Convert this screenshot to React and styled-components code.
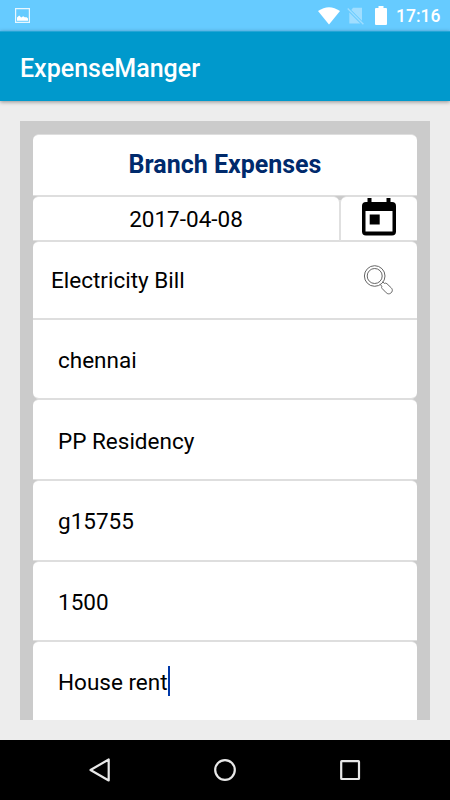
import React, {Component} from 'react'
import styled, {createGlobalStyle} from 'styled-components'

const GlobalStyle = createGlobalStyle`
  * {
    box-sizing: border-box;
  }

  body {
    margin: 0;
    font-family: Roboto, sans-serif;
  }
`

const Screen = styled.div`
  display: flex;
  flex-direction: column;
  width: 450px;
  height: 800px;
  overflow: hidden;
  background: #ededed;
`

const StatusBar = styled.div`
  display: flex;
  align-items: center;
  flex: 0 0 31px;
  padding: 0 10px 0 15px;
  background: #66cbff;
  color: #fff;
`

const StatusIcons = styled.div`
  display: flex;
  align-items: center;
  margin-left: auto;
`

const Clock = styled.span`
  width: 44px;
  margin-left: 9px;
  padding-top: 1px;
  font-size: 17.5px;
  font-weight: 500;
  line-height: 20px;
  white-space: nowrap;
`

const AppBar = styled.header`
  display: flex;
  align-items: center;
  flex: 0 0 70px;
  padding: 4px 20px 0;
  background: #0099cc;
  border-top: 1px solid #24a5d6;
  box-shadow: 0 1px 4px rgba(0, 0, 0, .4);
`

const AppTitle = styled.h1`
  margin: 0;
  color: #fff;
  font-size: 25px;
  font-weight: 500;
  line-height: 30px;
`

const Panel = styled.main`
  flex: 1;
  min-height: 0;
  margin: 20px;
  padding: 13px 13px 0;
  overflow: hidden;
  background: #cbcbcb;
`

const Card = styled.div`
  display: flex;
  align-items: center;
  flex: ${props => props.$grow ? 1 : 'none'};
  justify-content: ${props => props.$center ? 'center' : 'space-between'};
  width: ${props => props.$width || 'auto'};
  height: ${props => props.$height}px;
  padding: ${props => props.$pad || '0'};
  background: #fff;
  border: 1px solid #dedede;
  border-width: 1px 0;
  border-radius: ${props => props.$corners || '6px 6px 0 0'};
`

const Row = styled.div`
  display: flex;
  gap: 2px;
  background: linear-gradient(#cbcbcb 4px, #e0e0e0 4px);
`

const Heading = styled.h2`
  margin: 0;
  color: #002a6c;
  font-size: 25px;
  font-weight: 700;
  line-height: 30px;
`

const Value = styled.span`
  display: flex;
  align-items: center;
  color: #000;
  font-size: 22.5px;
  line-height: 30px;
  white-space: nowrap;
`

const Caret = styled.span`
  width: 2px;
  height: 30px;
  margin-top: -2px;
  background: #0038a8;
`

const NavBar = styled.nav`
  display: flex;
  align-items: center;
  justify-content: center;
  gap: 101px;
  flex: 0 0 60px;
  background: #000;
`

const PictureIcon = () => (
  <svg width='15' height='15' viewBox='0 0 15 15'>
    <path d='M.6.6h13.8v13.8H.6z' fill='none' stroke='#e8f7ff' strokeWidth='1.2' />
    <path d='M2 12.8V9.5l2.2-2 2 2 2-1.2 1.5 1h2l1.3 1.2v2.3z' fill='#fff' />
  </svg>
)

const WifiIcon = () => (
  <svg width='22' height='18' viewBox='0 0 22 18'>
    <path d='M0 4.1Q11-3.6 22 4.1L11 17.6z' fill='#fff' />
  </svg>
)

const NoSimIcon = styled(({className}) => (
  <svg className={className} width='18' height='18' viewBox='0 0 18 18'>
    <path d='M6 .8h9v13L4.3 2.9z' fill='#a0deff' />
    <path d='M2.3 5.5l11 11h-11z' fill='#a0deff' />
    <path d='M.7 1.5l15.7 15.7' stroke='#a0deff' strokeWidth='1.3' />
  </svg>
))`
  margin-left: 7px;
`

const BatteryIcon = styled(({className}) => (
  <svg className={className} width='12' height='19' viewBox='0 0 12 19'>
    <path d='M3.5 0h5v2H11q1 0 1 1v15q0 1-1 1H1q-1 0-1-1V3q0-1 1-1h2.5z' fill='#fff' />
  </svg>
))`
  margin-left: 10px;
`

const CalendarIcon = () => (
  <svg width='36' height='40' viewBox='0 0 36 40'>
    <path
      d='M6.5 1h4v4h15V1h4v4H31q4 0 4 4v25.5q0 4-4 4H5q-4 0-4-4V9q0-4 4-4h1.5zM4.5 14v20.5h27V14z'
      fill='#000'
      fillRule='evenodd'
    />
    <path d='M8.7 17.5h10v10h-10z' fill='#000' />
  </svg>
)

const SearchIcon = () => (
  <svg width='32' height='32' viewBox='0 0 32 32' fill='none' stroke='#666' strokeWidth='1'>
    <circle cx='11.7' cy='12' r='10.3' />
    <circle cx='11.7' cy='12' r='7.5' />
    <path d='M17.3 20.5l1.5 1.8q-.7 1.2.4 2.3l4.1 4.2c3.2 3.2 8.2-1.7 5-4.9l-4.4-4.2q-1.2-1-2.5-.3L19.7 17.8' />
  </svg>
)

const BackIcon = () => (
  <svg width='24' height='26' viewBox='0 0 24 26'>
    <path d='M20.7 2.5v21L2.5 13z' fill='none' stroke='#e8e8e8' strokeWidth='2.2' strokeLinejoin='round' />
  </svg>
)

const HomeIcon = () => (
  <svg width='24' height='24' viewBox='0 0 24 24'>
    <circle cx='12' cy='12' r='9.8' fill='none' stroke='#e8e8e8' strokeWidth='2.2' />
  </svg>
)

const RecentIcon = () => (
  <svg width='24' height='24' viewBox='0 0 24 24'>
    <rect x='3.2' y='3.2' width='17.8' height='17.8' rx='.5' fill='none' stroke='#e8e8e8' strokeWidth='2.2' />
  </svg>
)

const fields = [
  {text: 'chennai', height: 80, corners: '0 0 6px 6px'},
  {text: 'PP Residency', height: 81},
  {text: 'g15755', height: 81, pad: '0 25px'},
  {text: '1500', height: 80},
  {text: 'House rent', height: 82, pad: '0 25px', focused: true}
]

export default class App extends Component {
  render () {
    return (
      <Screen>
        <GlobalStyle />
        <StatusBar>
          <PictureIcon />
          <StatusIcons>
            <WifiIcon />
            <NoSimIcon />
            <BatteryIcon />
            <Clock>17:16</Clock>
          </StatusIcons>
        </StatusBar>
        <AppBar>
          <AppTitle>ExpenseManger</AppTitle>
        </AppBar>
        <Panel>
          <Card $height={62} $center>
            <Heading>Branch Expenses</Heading>
          </Card>
          <Row>
            <Card $height={45} $grow $center>
              <Value>2017-04-08</Value>
            </Card>
            <Card $height={45} $width='76px' $pad='0 0 3px' $center>
              <CalendarIcon />
            </Card>
          </Row>
          <Card $height={78} $pad='0 22px 0 18px'>
            <Value>Electricity Bill</Value>
            <SearchIcon />
          </Card>
          {fields.map(field => (
            <Card
              key={field.text}
              $height={field.height}
              $corners={field.corners}
              $pad={field.pad || '2px 25px 0'}
            >
              <Value>
                {field.text}
                {field.focused && <Caret />}
              </Value>
            </Card>
          ))}
        </Panel>
        <NavBar>
          <BackIcon />
          <HomeIcon />
          <RecentIcon />
        </NavBar>
      </Screen>
    )
  }
}
